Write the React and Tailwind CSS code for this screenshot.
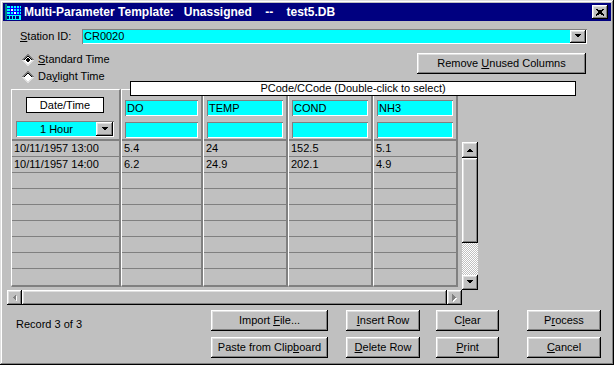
import React from "react"

const raised =
  "shadow-[inset_-1px_-1px_#000,inset_1px_1px_#fff,inset_-2px_-2px_#808080,inset_2px_2px_#dfdfdf]"
const sunken = "shadow-[inset_1px_1px_#808080,inset_-1px_-1px_#fff]"

const Tri = ({ dir = "down", color = "#000", shadow }) => {
  const pts = {
    down: "0,0 7,0 3.5,3.5",
    up: "0,4 7,4 3.5,0.5",
    left: "4,0 4,7 0.5,3.5",
    right: "0,0 0,7 3.5,3.5",
  }[dir]
  const w = dir === "left" || dir === "right" ? 5 : 8
  const h = dir === "left" || dir === "right" ? 8 : 5
  return (
    <svg width={w} height={h} viewBox={`0 0 ${w} ${h}`} shapeRendering="crispEdges">
      {shadow && <polygon points={pts} fill="#fff" transform="translate(1,1)" />}
      <polygon points={pts} fill={color} />
    </svg>
  )
}

const Btn = ({ children, className = "" }) => (
  <div className={`flex items-center justify-center h-[21px] bg-[#c0c0c0] ${raised} ${className}`}>
    {children}
  </div>
)

const U = ({ children }) => <span className="underline underline-offset-[1px]">{children}</span>

const Radio = ({ checked }) => (
  <svg width="12" height="12" viewBox="0 0 12 12" shapeRendering="crispEdges">
    <path d="M6 0 L0 6 L6 12 L12 6 Z" fill="#fff" />
    <path d="M0.5 6 L6 0.5 L11.5 6" stroke="#808080" fill="none" />
    <path d="M1.8 6 L6 1.8 L10.2 6" stroke="#000" fill="none" />
    <path d="M0.5 6 L6 11.5 L11.5 6" stroke="#dfdfdf" fill="none" />
    {checked && <path d="M6 3.5 L3.5 6 L6 8.5 L8.5 6 Z" fill="#000" />}
  </svg>
)

// little spreadsheet icon in the title bar
const AppIcon = () => (
  <svg width="16" height="16" viewBox="0 0 16 16" shapeRendering="crispEdges">
    <rect x="0" y="0" width="16" height="16" fill="#00ffff" />
    <rect x="0" y="0" width="2" height="16" fill="#008080" />
    <rect x="2" y="0" width="14" height="2" fill="#000080" />
    {[4, 7, 10].map((y) => (
      <rect key={y} x="2" y={y} width="14" height="1" fill="#0000ff" />
    ))}
    {[5, 8, 11, 14].map((x) => (
      <rect key={x} x={x} y="2" width="1" height="9" fill="#0000ff" />
    ))}
    <rect x="6" y="5" width="2" height="2" fill="#fff" />
    <rect x="9" y="8" width="2" height="2" fill="#fff" />
    <rect x="2" y="12" width="2" height="3" fill="#000080" />
    <rect x="5" y="12" width="2" height="3" fill="#000080" />
    <rect x="8" y="12" width="2" height="3" fill="#000080" />
    <rect x="11" y="12" width="3" height="3" fill="#000080" />
  </svg>
)

const columns = [
  { code: "DO", w: "w-[82px]", vals: ["5.4", "6.2"] },
  { code: "TEMP", w: "w-[85px]", vals: ["24", "24.9"] },
  { code: "COND", w: "w-[85px]", vals: ["152.5", "202.1"] },
  { code: "NH3", w: "w-[85px]", vals: ["5.1", "4.9"] },
]

const rowIdx = [0, 1, 2, 3, 4, 5, 6, 7, 8]

const Rows = ({ vals }) => (
  <>
    {rowIdx.map((i) => (
      <div
        key={i}
        className={`h-[16px] flex items-center pl-[2px] whitespace-nowrap ${i < 8 ? "border-b border-[#808080]" : ""}`}
      >
        {vals[i] || ""}
      </div>
    ))}
  </>
)

const colFrame =
  "flex flex-col border-t border-l border-t-white border-l-white border-r-2 border-b-2 border-r-[#808080] border-b-[#808080]"

export default function App() {
  return (
    <div
      className={`w-[614px] h-[365px] bg-[#c0c0c0] p-[3px] flex flex-col text-[11px] text-black font-['Liberation_Sans',Arial,sans-serif] shadow-[inset_-1px_-1px_#000,inset_1px_1px_#dfdfdf,inset_-2px_-2px_#808080,inset_2px_2px_#fff]`}
    >
      {/* title bar */}
      <div className="h-[18px] bg-[#000080] flex items-center pl-[2px] pr-[3px]">
        <AppIcon />
        <span className="ml-[3px] text-white font-bold text-[12px] whitespace-pre">
          {"Multi-Parameter Template:   Unassigned    --    test5.DB"}
        </span>
        <div className={`ml-auto w-[16px] h-[14px] bg-[#c0c0c0] flex items-center justify-center ${raised}`}>
          <svg width="8" height="7" viewBox="0 0 8 7" shapeRendering="crispEdges">
            <path d="M0 0 L8 7 M1 0 L8 6 M8 0 L0 7 M7 0 L0 6" stroke="#000" strokeWidth="1.1" />
          </svg>
        </div>
      </div>

      {/* station */}
      <div className="mt-[8px] h-[15px] flex items-center">
        <span className="ml-[17px] w-[62px]">
          <U>S</U>tation ID:
        </span>
        <div className={`w-[505px] h-[15px] flex bg-[#00ffff] p-[1px] ${sunken}`}>
          <span className="flex-1 pl-[1px] leading-[13px]">CR0020</span>
          <div className={`w-[16px] h-full bg-[#c0c0c0] flex items-center justify-center ${raised}`}>
            <Tri />
          </div>
        </div>
      </div>

      {/* radios + remove */}
      <div className="mt-[9px] h-[36px] flex items-start justify-between">
        <div className="ml-[19px] flex flex-col gap-[4px]">
          <div className="flex items-center h-[13px]">
            <Radio checked />
            <span className="ml-[4px]">
              <U>S</U>tandard Time
            </span>
          </div>
          <div className="flex items-center h-[13px]">
            <Radio />
            <span className="ml-[4px]">
              Da<U>y</U>light Time
            </span>
          </div>
        </div>
        <Btn className="w-[169px] h-[20px] mr-[25px]">
          <span>
            Remove <U>U</U>nused Columns
          </span>
        </Btn>
      </div>

      {/* grid */}
      <div className="relative flex ml-[4px]">
        <div className="w-[455px] flex flex-col">
          <div className="ml-[4px] w-[447px] flex">
            <div className={`w-[110px] ${colFrame}`}>
              <div className="h-[49px] flex flex-col">
                <div className="mt-[7px] ml-[14px] w-[78px] h-[16px] bg-white border border-black flex items-center justify-center">
                  Date/Time
                </div>
                <div className={`mt-[8px] ml-[4px] w-[98px] h-[16px] flex bg-[#00ffff] p-[1px] ${sunken}`}>
                  <span className="flex-1 flex items-center justify-center">1 Hour</span>
                  <div className={`w-[17px] h-full bg-[#c0c0c0] flex items-center justify-center ${raised}`}>
                    <Tri />
                  </div>
                </div>
              </div>
              <div className="h-[2px] bg-[#808080]" />
              <Rows vals={["10/11/1957 13:00", "10/11/1957 14:00"]} />
            </div>
            {columns.map((c) => (
              <div key={c.code} className={`${c.w} ${colFrame}`}>
                <div className="h-[49px] pt-[10px] px-[3px] flex flex-col">
                  <div className={`h-[16px] bg-[#00ffff] pl-[2px] flex items-center ${sunken}`}>{c.code}</div>
                  <div className={`mt-[6px] h-[16px] bg-[#00ffff] ${sunken}`} />
                </div>
                <div className="h-[2px] bg-[#808080]" />
                <Rows vals={c.vals} />
              </div>
            ))}
          </div>

          {/* horizontal scrollbar */}
          <div className="mt-[3px] h-[15px] flex">
            <div className={`w-[15px] h-full bg-[#c0c0c0] flex items-center justify-center ${raised}`}>
              <Tri dir="left" color="#808080" shadow />
            </div>
            <div className={`flex-1 h-full bg-[#c0c0c0] ${raised}`} />
            <div className={`w-[15px] h-full bg-[#c0c0c0] flex items-center justify-center ${raised}`}>
              <Tri dir="right" color="#808080" shadow />
            </div>
          </div>
        </div>

        {/* vertical scrollbar */}
        <div className="mt-[53px] w-[16px] h-[148px] flex flex-col">
          <div className={`h-[16px] bg-[#c0c0c0] flex items-center justify-center ${raised}`}>
            <Tri dir="up" />
          </div>
          <div className={`h-[85px] bg-[#c0c0c0] ${raised}`} />
          <div className="flex-1 bg-[image:repeating-conic-gradient(#fff_0%_25%,#c0c0c0_0%_50%)] bg-[length:2px_2px]" />
          <div className={`h-[15px] bg-[#c0c0c0] flex items-center justify-center ${raised}`}>
            <Tri />
          </div>
        </div>

        <div className="absolute left-[123px] top-[-8px] w-[446px] h-[15px] bg-white border border-black flex items-center justify-center">
          PCode/CCode (Double-click to select)
        </div>
      </div>

      {/* bottom */}
      <div className="mt-[5px] flex">
        <div className="ml-[13px] w-[195px] pt-[6px]">Record 3 of 3</div>
        <div className="w-[117px] flex flex-col gap-[6px]">
          <Btn>
            <span>
              Import <U>F</U>ile...
            </span>
          </Btn>
          <Btn>
            <span>
              Paste from Clip<U>b</U>oard
            </span>
          </Btn>
        </div>
        <div className="ml-[18px] w-[74px] flex flex-col gap-[6px]">
          <Btn>
            <span>
              <U>I</U>nsert Row
            </span>
          </Btn>
          <Btn>
            <span>
              <U>D</U>elete Row
            </span>
          </Btn>
        </div>
        <div className="ml-[16px] w-[63px] flex flex-col gap-[6px]">
          <Btn>
            <span>
              C<U>l</U>ear
            </span>
          </Btn>
          <Btn>
            <span>
              <U>P</U>rint
            </span>
          </Btn>
        </div>
        <div className="ml-[28px] w-[74px] flex flex-col gap-[6px]">
          <Btn>
            <span>
              P<U>r</U>ocess
            </span>
          </Btn>
          <Btn>
            <span>
              <U>C</U>ancel
            </span>
          </Btn>
        </div>
      </div>
    </div>
  )
}
